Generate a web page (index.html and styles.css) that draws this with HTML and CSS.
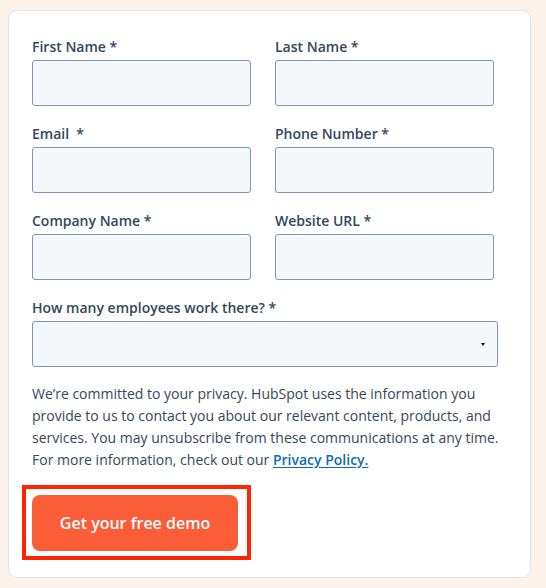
FILE: index.html
```html
<!DOCTYPE html>
<html>
<head>
<meta charset="utf-8">
<link rel="stylesheet" href="styles.css">
</head>
<body>
<div class="card">
  <form class="form">
    <div class="grid">
      <div class="field">
        <label class="label">First Name *</label>
        <div class="input"></div>
      </div>
      <div class="field">
        <label class="label">Last Name *</label>
        <div class="input"></div>
      </div>
      <div class="field">
        <label class="label">Email&nbsp; *</label>
        <div class="input"></div>
      </div>
      <div class="field">
        <label class="label">Phone Number *</label>
        <div class="input"></div>
      </div>
      <div class="field">
        <label class="label">Company Name *</label>
        <div class="input"></div>
      </div>
      <div class="field">
        <label class="label">Website URL *</label>
        <div class="input"></div>
      </div>
    </div>
    <div class="field full">
      <label class="label">How many employees work there? *</label>
      <div class="select"><span class="caret"></span></div>
    </div>
    <p class="privacy">We’re committed to your privacy. HubSpot uses the information you provide to us to contact you about our relevant content, products, and services. You may unsubscribe from these communications at any time. For more information, check out our <a class="link" href="#">Privacy Policy.</a></p>
    <div class="highlight">
      <button class="btn" type="button">Get your free demo</button>
    </div>
  </form>
</div>
</body>
</html>
```
FILE: styles.css
```css
* { box-sizing: border-box; }
html, body { margin: 0; padding: 0; }
body {
  background: #fcf2e9;
  font-family: "Open Sans", "Noto Sans", sans-serif;
  color: #33475b;
  width: 546px;
  height: 588px;
  padding: 10px 0 0 8px;
}
.card {
  width: 523px;
  height: 568px;
  background: #fff;
  border: 1px solid #dfe5ee;
  border-radius: 9px;
  padding: 26px 0 0 23px;
}
.grid {
  display: grid;
  grid-template-columns: 219px 219px;
  column-gap: 24px;
  row-gap: 18px;
}
.field { display: flex; flex-direction: column; }
.label {
  font-size: 14px;
  font-weight: 600;
  line-height: 20px;
  height: 20px;
  margin-bottom: 3px;
  color: #33475b;
}
.input {
  height: 46px;
  background: #f5f8fa;
  border: 1px solid #7c98b6;
  border-radius: 3px;
}
.full { margin-top: 18px; }
.select {
  width: 466px;
  height: 46px;
  background: #f5f8fa;
  border: 1px solid #7c98b6;
  border-radius: 3px;
  display: flex;
  align-items: center;
  justify-content: flex-end;
  padding-right: 12px;
}
.caret {
  width: 0; height: 0;
  border-left: 2.5px solid transparent;
  border-right: 2.5px solid transparent;
  border-top: 3px solid #111;
}
.privacy {
  margin: 16px 0 0 0;
  width: 475px;
  font-size: 14px;
  line-height: 22px;
  color: #33475b;
}
.link {
  color: #0b6cb4;
  font-weight: 600;
  text-decoration: underline;
  text-underline-offset: 2px;
}
.highlight {
  display: inline-block;
  margin: 14px 0 0 -10px;
  border: 4px solid #ff2500;
  padding: 6px 9px 5px 6px;
}
.btn {
  display: block;
  width: 206px;
  height: 56px;
  border: none;
  border-radius: 8px;
  background: #fa5d38;
  color: #fff;
  font-family: "Open Sans", "Noto Sans", sans-serif;
  font-size: 16px;
  font-weight: 600;
  padding: 0;
}
```
